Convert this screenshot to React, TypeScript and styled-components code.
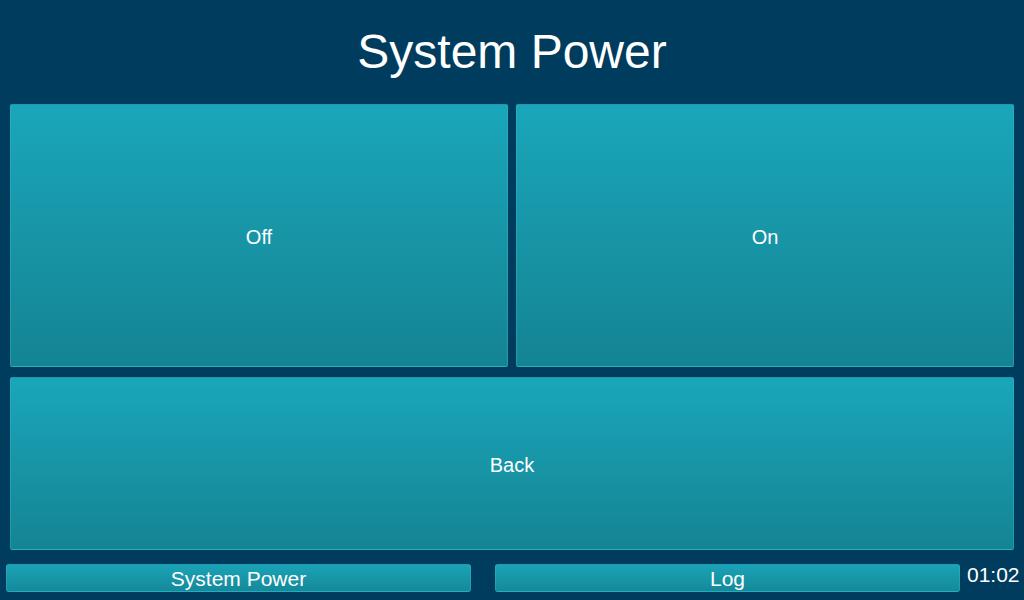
import React from "react";
import styled, { createGlobalStyle } from "styled-components";

const Global = createGlobalStyle`
  html, body {
    margin: 0;
    padding: 0;
    background: #003c5e;
  }
  body {
    font-family: "Liberation Sans", Arial, sans-serif;
    color: #ffffff;
  }
`;

const Screen = styled.div`
  width: 1024px;
  height: 600px;
  display: flex;
  flex-direction: column;
  background: #003c5e;
  box-sizing: border-box;
  overflow: hidden;
`;

const Header = styled.h1`
  margin: 0;
  height: 104px;
  box-sizing: border-box;
  padding-top: 28px;
  font-size: 48px;
  line-height: 48px;
  font-weight: normal;
  text-align: center;
`;

const Grid = styled.div`
  display: grid;
  grid-template-columns: 498px 498px;
  grid-template-rows: 263px 173px;
  column-gap: 8px;
  row-gap: 10px;
  padding-left: 10px;
`;

const Tile = styled.button<{ $span?: boolean }>`
  grid-column: ${(p) => (p.$span ? "1 / span 2" : "auto")};
  box-sizing: border-box;
  margin: 0;
  padding: 4px 0 0;
  border: 1px solid rgba(60, 190, 210, 0.35);
  border-radius: 2px;
  background: linear-gradient(to bottom, #1aa6ba 0%, #148493 100%);
  color: #ffffff;
  font-family: "Liberation Sans", Arial, sans-serif;
  font-size: 20px;
  display: flex;
  align-items: center;
  justify-content: center;
`;

const BottomBar = styled.div`
  display: flex;
  align-items: flex-start;
  margin-top: 14px;
  padding-left: 6px;
`;

const NavButton = styled.button`
  width: 465px;
  height: 28px;
  box-sizing: border-box;
  margin: 0 24px 0 0;
  padding: 2px 0 0;
  border: 1px solid rgba(60, 190, 210, 0.35);
  border-radius: 3px;
  background: linear-gradient(to bottom, #1aa3b7 0%, #15899a 100%);
  color: #ffffff;
  font-family: "Liberation Sans", Arial, sans-serif;
  font-size: 21px;
  line-height: 24px;
  display: flex;
  align-items: center;
  justify-content: center;

  &:last-of-type {
    margin-right: 0;
  }
`;

const Clock = styled.div`
  margin-left: 7px;
  margin-top: -1px;
  font-size: 21px;
  line-height: 24px;
  color: #ffffff;
`;

export default function App() {
  return (
    <>
      <Global />
      <Screen>
        <Header>System Power</Header>
        <Grid>
          <Tile>Off</Tile>
          <Tile>On</Tile>
          <Tile $span>Back</Tile>
        </Grid>
        <BottomBar>
          <NavButton>System Power</NavButton>
          <NavButton>Log</NavButton>
          <Clock>01:02</Clock>
        </BottomBar>
      </Screen>
    </>
  );
}
